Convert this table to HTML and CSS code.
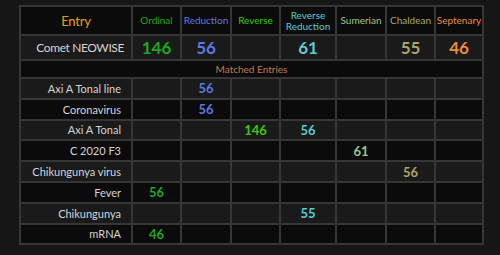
FILE: index.html
```html
<!DOCTYPE html>
<html>
<head>
<meta charset="utf-8">
<link rel="stylesheet" href="styles.css">
</head>
<body>
<div class="grid">
  <div class="cell hd entry-h">Entry</div>
  <div class="cell hd c-ord">Ordinal</div>
  <div class="cell hd c-red">Reduction</div>
  <div class="cell hd c-rev">Reverse</div>
  <div class="cell hd c-rr">Reverse<br>Reduction</div>
  <div class="cell hd c-sum">Sumerian</div>
  <div class="cell hd c-cha">Chaldean</div>
  <div class="cell hd c-sep">Septenary</div>

  <div class="cell main name">Comet NEOWISE</div>
  <div class="cell main big c-ord">146</div>
  <div class="cell main big c-red">56</div>
  <div class="cell main big"></div>
  <div class="cell main big c-rr">61</div>
  <div class="cell main big"></div>
  <div class="cell main big c-cha">55</div>
  <div class="cell main big c-sep">46</div>

  <div class="cell matched">Matched Entries</div>

  <div class="cell row g name">Axi A Tonal line</div>
  <div class="cell row g"></div>
  <div class="cell row g num c-red">56</div>
  <div class="cell row g"></div>
  <div class="cell row g"></div>
  <div class="cell row g"></div>
  <div class="cell row g"></div>
  <div class="cell row g"></div>

  <div class="cell row b name">Coronavirus</div>
  <div class="cell row b"></div>
  <div class="cell row b num c-red">56</div>
  <div class="cell row b"></div>
  <div class="cell row b"></div>
  <div class="cell row b"></div>
  <div class="cell row b"></div>
  <div class="cell row b"></div>

  <div class="cell row g name">Axi A Tonal</div>
  <div class="cell row g"></div>
  <div class="cell row g"></div>
  <div class="cell row g num c-rev">146</div>
  <div class="cell row g num c-rr">56</div>
  <div class="cell row g"></div>
  <div class="cell row g"></div>
  <div class="cell row g"></div>

  <div class="cell row b name">C 2020 F3</div>
  <div class="cell row b"></div>
  <div class="cell row b"></div>
  <div class="cell row b"></div>
  <div class="cell row b"></div>
  <div class="cell row b num c-sum">61</div>
  <div class="cell row b"></div>
  <div class="cell row b"></div>

  <div class="cell row g name">Chikungunya virus</div>
  <div class="cell row g"></div>
  <div class="cell row g"></div>
  <div class="cell row g"></div>
  <div class="cell row g"></div>
  <div class="cell row g"></div>
  <div class="cell row g num c-cha">56</div>
  <div class="cell row g"></div>

  <div class="cell row b name">Fever</div>
  <div class="cell row b num c-ord">56</div>
  <div class="cell row b"></div>
  <div class="cell row b"></div>
  <div class="cell row b"></div>
  <div class="cell row b"></div>
  <div class="cell row b"></div>
  <div class="cell row b"></div>

  <div class="cell row g name">Chikungunya</div>
  <div class="cell row g"></div>
  <div class="cell row g"></div>
  <div class="cell row g"></div>
  <div class="cell row g num c-rr">55</div>
  <div class="cell row g"></div>
  <div class="cell row g"></div>
  <div class="cell row g"></div>

  <div class="cell row b name">mRNA</div>
  <div class="cell row b num c-ord">46</div>
  <div class="cell row b"></div>
  <div class="cell row b"></div>
  <div class="cell row b"></div>
  <div class="cell row b"></div>
  <div class="cell row b"></div>
  <div class="cell row b"></div>
</div>
</body>
</html>
```
FILE: styles.css
```css
html, body {
  margin: 0;
  padding: 0;
  background: #161616;
}
body {
  padding: 5px 0 0 19px;
  font-family: Lato, "Open Sans", sans-serif;
}
.grid {
  display: inline-grid;
  grid-template-columns: 110px 47px 48px 47px 54px 48px 47px 46px;
  grid-template-rows: 27px 23px 16px repeat(8, 18.8px);
  gap: 2px;
  padding: 2px;
  background: #363636;
}
.cell {
  display: flex;
  align-items: center;
  justify-content: center;
  text-align: center;
}
.hd {
  background: #0b0b0b;
  font-size: 10px;
  line-height: 11px;
}
.entry-h {
  color: #e5a00d;
  font-size: 13px;
  line-height: 14px;
  letter-spacing: -0.2px;
}
.main {
  background: #1a1a1a;
}
.main.name {
  justify-content: flex-end;
  padding-right: 7px;
  color: #d4d4d4;
  font-size: 12px;
  letter-spacing: -0.4px;
}
.big {
  font-size: 17px;
  font-weight: 700;
}
.matched {
  grid-column: 1 / -1;
  background: #0b0b0b;
  color: #c47a4a;
  font-size: 10px;
}
.row.g { background: #1a1a1a; }
.row.b { background: #0b0b0b; }
.row.name {
  justify-content: flex-end;
  padding-right: 10px;
  color: #d4d4d4;
  font-size: 11px;
}
.num {
  font-size: 13px;
  font-weight: 700;
}
.c-ord { color: #1fa81f; }
.c-red { color: #5b7ae2; }
.c-rev { color: #3cc80a; }
.c-rr { color: #5ccbd2; }
.c-sum { color: #a2c48a; }
.c-cha { color: #a9a66a; }
.c-sep { color: #ee8a3c; }
```
